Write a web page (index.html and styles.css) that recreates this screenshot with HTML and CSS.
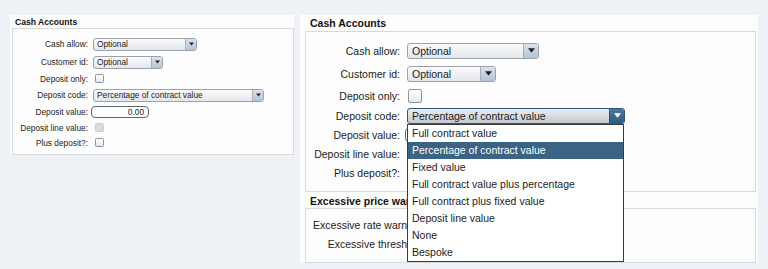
FILE: index.html
```html
<!DOCTYPE html>
<html lang="en">
<head>
<meta charset="utf-8">
<title>Cash Accounts</title>
<link rel="stylesheet" href="styles.css">
</head>
<body>
<div class="stage">
  <section class="panel panel-sm">
    <h2 class="panel-title">Cash Accounts</h2>
    <div class="group">
      <div class="form form-main">
        <span class="lbl">Cash allow:</span>
        <div class="ctrl"><div class="select w-cash"><span class="sel-val">Optional</span><span class="sel-btn"><svg viewBox="0 0 8 5"><path d="M0 0H8L4 5Z"/></svg></span></div></div>
        <span class="lbl">Customer id:</span>
        <div class="ctrl"><div class="select w-cust"><span class="sel-val">Optional</span><span class="sel-btn"><svg viewBox="0 0 8 5"><path d="M0 0H8L4 5Z"/></svg></span></div></div>
        <span class="lbl">Deposit only:</span>
        <div class="ctrl"><span class="check"></span></div>
        <span class="lbl">Deposit code:</span>
        <div class="ctrl"><div class="select w-code"><span class="sel-val">Percentage of contract value</span><span class="sel-btn"><svg viewBox="0 0 8 5"><path d="M0 0H8L4 5Z"/></svg></span></div></div>
        <span class="lbl">Deposit value:</span>
        <div class="ctrl"><span class="input">0.00</span></div>
        <span class="lbl">Deposit line value:</span>
        <div class="ctrl"><span class="check check-off"></span></div>
        <span class="lbl">Plus deposit?:</span>
        <div class="ctrl"><span class="check"></span></div>
      </div>
    </div>
  </section>

  <section class="panel panel-lg">
    <h2 class="panel-title">Cash Accounts</h2>
    <div class="group group-first">
      <div class="form form-main">
        <span class="lbl">Cash allow:</span>
        <div class="ctrl"><div class="select w-cash"><span class="sel-val">Optional</span><span class="sel-btn"><svg viewBox="0 0 8 5"><path d="M0 0H8L4 5Z"/></svg></span></div></div>
        <span class="lbl">Customer id:</span>
        <div class="ctrl"><div class="select w-cust"><span class="sel-val">Optional</span><span class="sel-btn"><svg viewBox="0 0 8 5"><path d="M0 0H8L4 5Z"/></svg></span></div></div>
        <span class="lbl">Deposit only:</span>
        <div class="ctrl"><span class="check"></span></div>
        <span class="lbl">Deposit code:</span>
        <div class="ctrl">
          <div class="select select-open w-code"><span class="sel-val">Percentage of contract value</span><span class="sel-btn"><svg viewBox="0 0 8 5"><path d="M0 0H8L4 5Z"/></svg></span>
            <ul class="dropdown">
              <li>Full contract value</li>
              <li class="is-active">Percentage of contract value</li>
              <li>Fixed value</li>
              <li>Full contract value plus percentage</li>
              <li>Full contract plus fixed value</li>
              <li>Deposit line value</li>
              <li>None</li>
              <li>Bespoke</li>
            </ul>
          </div>
        </div>
        <span class="lbl">Deposit value:</span>
        <div class="ctrl"><span class="input"></span></div>
        <span class="lbl">Deposit line value:</span>
        <div class="ctrl"><span class="check check-off"></span></div>
        <span class="lbl">Plus deposit?:</span>
        <div class="ctrl"><span class="check"></span></div>
      </div>
    </div>
    <h2 class="panel-title panel-title-2">Excessive price warning</h2>
    <div class="group group-second">
      <div class="form form-excess">
        <span class="lbl">Excessive rate warning:</span>
        <div class="ctrl"><span class="check"></span></div>
        <span class="lbl">Excessive threshold:</span>
        <div class="ctrl"><span class="input"></span></div>
      </div>
    </div>
  </section>
</div>
</body>
</html>
```
FILE: styles.css
```css
* { box-sizing: border-box; }

html, body {
  margin: 0;
  padding: 0;
}

body {
  width: 768px;
  height: 269px;
  overflow: hidden;
  background: #eef2f6;
  font-family: "Liberation Sans", Arial, sans-serif;
  color: #222;
}

.stage {
  display: flex;
  align-items: flex-start;
  gap: 6px;
  padding: 15px 0 0 10px;
}

.panel {
  background: #fdfdfd;
  overflow: hidden;
  display: flex;
  flex-direction: column;
}

.panel-title {
  margin: 0;
  font-weight: bold;
  color: #111;
  white-space: nowrap;
}

.group {
  border: 1px solid #d6d9dc;
}

.form {
  display: grid;
  align-items: center;
}

.lbl {
  text-align: right;
  white-space: nowrap;
}

.ctrl {
  display: flex;
  align-items: center;
  min-width: 0;
}

/* ---- select ---- */
.select {
  position: relative;
  display: flex;
  align-items: stretch;
  border: 1px solid #9ba2ab;
  background: linear-gradient(#fbfbfc, #e3e6ea);
  white-space: nowrap;
}

.sel-val {
  flex: 1;
  display: flex;
  align-items: center;
  overflow: hidden;
}

.sel-btn {
  display: flex;
  align-items: center;
  justify-content: center;
  border-left: 1px solid #a5b0bd;
  background: linear-gradient(#d9e2ec, #b4c3d4);
}

.sel-btn svg { display: block; }
.sel-btn path { fill: #1f2328; }

.select-open {
  border-color: #2e557a;
  background: linear-gradient(#eceef1, #c4c8cf);
}

.select-open .sel-btn {
  background: linear-gradient(#4d779c, #335d7e);
  border-left-color: #2e557a;
}

.select-open .sel-btn path { fill: #fff; }

/* ---- checkbox / input ---- */
.check {
  display: block;
  border: 1px solid #8d96a1;
  background: linear-gradient(#ffffff, #e6e9ec);
}

.check-off {
  border-color: #c8ccd0;
  background: #d9dcdf;
}

.input {
  display: flex;
  align-items: center;
  justify-content: flex-end;
  border: 1px solid #5f656d;
  background: #fff;
}

/* ---- dropdown ---- */
.dropdown {
  position: absolute;
  z-index: 5;
  top: calc(100% + 1px);
  left: -1px;
  width: 217px;
  margin: 0;
  padding: 0;
  list-style: none;
  background: #fff;
  border: 1px solid #3b3b3b;
}

.dropdown li {
  height: 17px;
  line-height: 17px;
  padding-left: 4px;
  white-space: nowrap;
  color: #222;
}

.dropdown li.is-active {
  background: #3a6384;
  color: #fff;
}

/* ================= small panel ================= */
.panel-sm {
  width: 284px;
  height: 140px;
  font-size: 8.3px;
}

.panel-sm .panel-title {
  font-size: 8.6px;
  line-height: 11px;
  padding: 2px 0 0 5px;
}

.panel-sm .group {
  margin-left: 2px;
  padding-top: 6px;
  flex: 1;
}

.panel-sm .form-main {
  grid-template-columns: 75px 1fr;
  grid-template-rows: 18px 18px 15px 18px 16px 15px 15px;
  column-gap: 5px;
}

.panel-sm .select {
  height: 13px;
  border-radius: 3px;
}

.panel-sm .sel-val { padding-left: 3px; }

.panel-sm .sel-btn {
  width: 11px;
  border-radius: 0 2px 2px 0;
}

.panel-sm .sel-btn svg { width: 5px; height: 4px; }

.panel-sm .w-cash { width: 104px; }
.panel-sm .w-cust { width: 70px; }
.panel-sm .w-code { width: 171px; }

.panel-sm .check {
  width: 9px;
  height: 9px;
  margin-left: 2px;
  border-radius: 1.5px;
}

.panel-sm .input {
  width: 58px;
  height: 12px;
  margin-left: -2px;
  padding-right: 4px;
  border-radius: 4px;
}

/* ================= large panel ================= */
.panel-lg {
  width: 458px;
  height: 248px;
  font-size: 10.5px;
}

.panel-lg .panel-title {
  font-size: 10.5px;
  line-height: 15px;
  padding: 1px 0 0 10px;
}

.panel-lg .panel-title-2 {
  line-height: 13px;
  padding-top: 3px;
}

.panel-lg .group {
  margin: 0 2px 0 5px;
}

.panel-lg .group-first {
  padding: 7px 0 9px;
}

.panel-lg .group-second {
  padding-top: 6px;
  flex: 1;
}

.panel-lg .form-main {
  grid-template-columns: 94px 1fr;
  grid-template-rows: 23px 23px 21px 19px 19px 19px 19px;
  column-gap: 7px;
}

.panel-lg .form-excess {
  grid-template-columns: 118px 1fr;
  grid-template-rows: 19px 19px;
  column-gap: 7px;
}

.panel-lg .select {
  height: 16px;
  border-radius: 3px;
}

.panel-lg .sel-val { padding-left: 4px; }

.panel-lg .sel-btn {
  width: 15px;
  border-radius: 0 2px 2px 0;
}

.panel-lg .sel-btn svg { width: 7px; height: 5px; }

.panel-lg .w-cash { width: 132px; }
.panel-lg .w-cust { width: 89px; }
.panel-lg .w-code { width: 218px; }

.panel-lg .check {
  width: 14px;
  height: 14px;
  margin-left: 1px;
  border-radius: 2px;
}

.panel-lg .input {
  width: 74px;
  height: 16px;
  margin-left: -2px;
  padding-right: 5px;
  border-radius: 5px;
}
```
